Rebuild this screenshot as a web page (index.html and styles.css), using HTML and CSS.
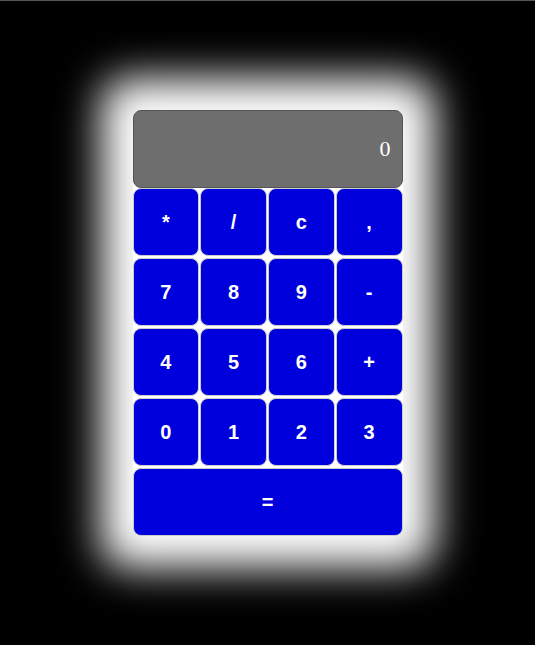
FILE: index.html
```html
<!DOCTYPE html>
<html>
<head>
<meta charset="utf-8">
<link rel="stylesheet" href="styles.css">
</head>
<body>
<div class="calculator">
  <div class="display">0</div>
  <div class="keys">
    <button class="key">*</button>
    <button class="key">/</button>
    <button class="key">c</button>
    <button class="key">,</button>
    <button class="key">7</button>
    <button class="key">8</button>
    <button class="key">9</button>
    <button class="key">-</button>
    <button class="key">4</button>
    <button class="key">5</button>
    <button class="key">6</button>
    <button class="key">+</button>
    <button class="key">0</button>
    <button class="key">1</button>
    <button class="key">2</button>
    <button class="key">3</button>
    <button class="key key-wide">=</button>
  </div>
</div>
</body>
</html>
```
FILE: styles.css
```css
html, body {
  margin: 0;
  padding: 0;
  background: #000;
}
body {
  box-sizing: border-box;
  height: 100vh;
  border-top: 1px solid #555;
  display: flex;
  align-items: center;
  justify-content: center;
  font-family: "Liberation Sans", Arial, sans-serif;
}
.calculator {
  width: 270px;
  background: #fff;
  border-radius: 8px;
  box-shadow: 0 0 42px 32px #fff;
}
.display {
  box-sizing: border-box;
  height: 78px;
  background: #6e6e6e;
  border: 1.5px solid #555;
  border-radius: 8px;
  color: #fff;
  font-family: "Liberation Serif", "Times New Roman", serif;
  font-size: 22px;
  display: flex;
  align-items: center;
  justify-content: flex-end;
  padding-right: 11px;
}
.keys {
  display: grid;
  grid-template-columns: repeat(4, 1fr);
  grid-auto-rows: 68px;
  column-gap: 1px;
  row-gap: 2px;
}
.key {
  box-sizing: border-box;
  background: #0000dc;
  color: #fff;
  border: 1px solid #ccc;
  border-radius: 8px;
  font-family: "Liberation Sans", Arial, sans-serif;
  font-weight: bold;
  font-size: 20px;
  padding: 0;
  margin: 0;
}
.key-wide {
  grid-column: 1 / span 4;
}
```
